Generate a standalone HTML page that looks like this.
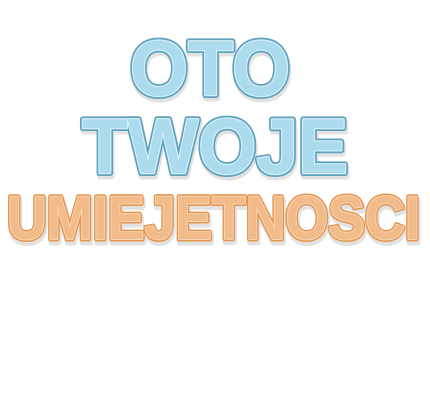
<!DOCTYPE html>
<html><head><meta charset="utf-8"><style>
html,body{margin:0;padding:0;background:#fff;width:430px;height:400px;overflow:hidden}
svg{display:block}
text{font-family:"Liberation Sans","DejaVu Sans",sans-serif;font-weight:bold;}
</style></head><body>
<svg width="430" height="400" viewBox="0 0 430 400">
<g>
 <g fill="#e2e2e2" stroke="#e2e2e2" stroke-width="7" stroke-linejoin="round">
  <text x="131" y="98" font-size="78" textLength="160" lengthAdjust="spacingAndGlyphs">OTO</text>
  <text x="83" y="176" font-size="78" textLength="266" lengthAdjust="spacingAndGlyphs">TWOJE</text>
  <text x="8" y="242" font-size="61" textLength="413" lengthAdjust="spacingAndGlyphs">UMIEJETNOSCI</text>
 </g>
 <g fill="#acdbee" stroke="#5fa2be" stroke-width="6" stroke-linejoin="round" paint-order="stroke">
  <text x="130" y="95" font-size="78" textLength="160" lengthAdjust="spacingAndGlyphs">OTO</text>
  <text x="82" y="173" font-size="78" textLength="266" lengthAdjust="spacingAndGlyphs">TWOJE</text>
 </g>
 <g fill="#acdbee" stroke="#d4eef8" stroke-width="2.5" stroke-linejoin="round" paint-order="stroke">
  <text x="130" y="95" font-size="78" textLength="160" lengthAdjust="spacingAndGlyphs">OTO</text>
  <text x="82" y="173" font-size="78" textLength="266" lengthAdjust="spacingAndGlyphs">TWOJE</text>
 </g>
 <g fill="#f2bb8a" stroke="#e5954f" stroke-width="5" stroke-linejoin="round" paint-order="stroke">
  <text x="7" y="239" font-size="61" textLength="413" lengthAdjust="spacingAndGlyphs">UMIEJETNOSCI</text>
 </g>
 <g fill="#f2bb8a" stroke="#f8d6b6" stroke-width="2" stroke-linejoin="round" paint-order="stroke">
  <text x="7" y="239" font-size="61" textLength="413" lengthAdjust="spacingAndGlyphs">UMIEJETNOSCI</text>
 </g>
</g>
</svg>
</body></html>
